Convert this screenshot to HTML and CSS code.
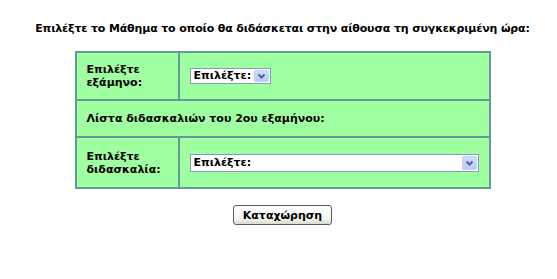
FILE: index.html
```html
<!DOCTYPE html>
<html lang="el">
<head>
<meta charset="utf-8">
<title>Επιλογή μαθήματος</title>
<link rel="stylesheet" href="styles.css">
</head>
<body>
<div class="page">
  <p class="title">Επιλέξτε το Μάθημα το οποίο θα διδάσκεται στην αίθουσα τη συγκεκριμένη ώρα:</p>
  <div class="form-grid">
    <div class="cell label">Επιλέξτε<br>εξάμηνο:</div>
    <div class="cell field">
      <div class="sel sel-short">
        <select><option>Επιλέξτε:</option></select>
        <span class="arrow"><svg width="13" height="12" viewBox="0 0 13 12"><path d="M3.5 4.5 L6.5 7.5 L9.5 4.5" fill="none" stroke="#4d6185" stroke-width="2"/></svg></span>
      </div>
    </div>
    <div class="cell wide">Λίστα διδασκαλιών του 2ου εξαμήνου:</div>
    <div class="cell label">Επιλέξτε<br>διδασκαλία:</div>
    <div class="cell field">
      <div class="sel sel-long">
        <select><option>Επιλέξτε:</option></select>
        <span class="arrow"><svg width="13" height="12" viewBox="0 0 13 12"><path d="M3.5 4.5 L6.5 7.5 L9.5 4.5" fill="none" stroke="#4d6185" stroke-width="2"/></svg></span>
      </div>
    </div>
  </div>
  <div class="actions"><button class="btn" type="button">Καταχώρηση</button></div>
</div>
</body>
</html>
```

FILE: styles.css
```css
html, body {
  margin: 0;
  padding: 0;
  background: #ffffff;
}

.page {
  padding-left: 8px;
  font-family: "DejaVu Sans", Verdana, sans-serif;
  font-size: 11px;
  font-weight: bold;
  color: #000;
}

.title {
  margin: 22px 0 16px;
  line-height: 13px;
  text-align: center;
  letter-spacing: -0.15px;
}

.form-grid {
  width: 416px;
  box-sizing: border-box;
  margin: 0 auto;
  display: grid;
  grid-template-columns: 101px 309px;
  grid-template-rows: 46px 35px 49px;
  gap: 2px;
  border: 2px solid #669999;
  background: #669999;
}

.cell {
  background: #a0ffa0;
  display: flex;
  align-items: center;
  padding-left: 10px;
  line-height: 13px;
}

.wide {
  grid-column: 1 / -1;
}

.field {
  padding-left: 10px;
}

.sel {
  display: flex;
  box-sizing: border-box;
  border: 1px solid #7f9db9;
  background: #fff;
  padding: 1px;
}

.sel-short {
  width: 81px;
  height: 16px;
}

.sel-long {
  width: 289px;
  height: 18px;
}

.sel select {
  flex: 1;
  min-width: 0;
  appearance: none;
  -webkit-appearance: none;
  border: 0;
  margin: 0;
  padding: 0 0 0 2px;
  background: transparent;
  font: inherit;
  color: #000;
  line-height: 12px;
  outline: none;
}

.arrow {
  width: 15px;
  box-sizing: border-box;
  border: 1px solid #c3d3fd;
  border-radius: 1px;
  background: linear-gradient(#d0defd, #b7c9f6);
  display: flex;
  align-items: center;
  justify-content: center;
}

.actions {
  display: flex;
  justify-content: center;
  margin-top: 16px;
}

.btn {
  width: 99px;
  height: 20px;
  box-sizing: border-box;
  padding: 0;
  border: 1px solid #4e6074;
  border-radius: 3px;
  background: linear-gradient(#ffffff, #f4f4ef 70%, #dcd8cc);
  font-family: "DejaVu Sans", Verdana, sans-serif;
  font-size: 11px;
  font-weight: bold;
  color: #000;
}
```
